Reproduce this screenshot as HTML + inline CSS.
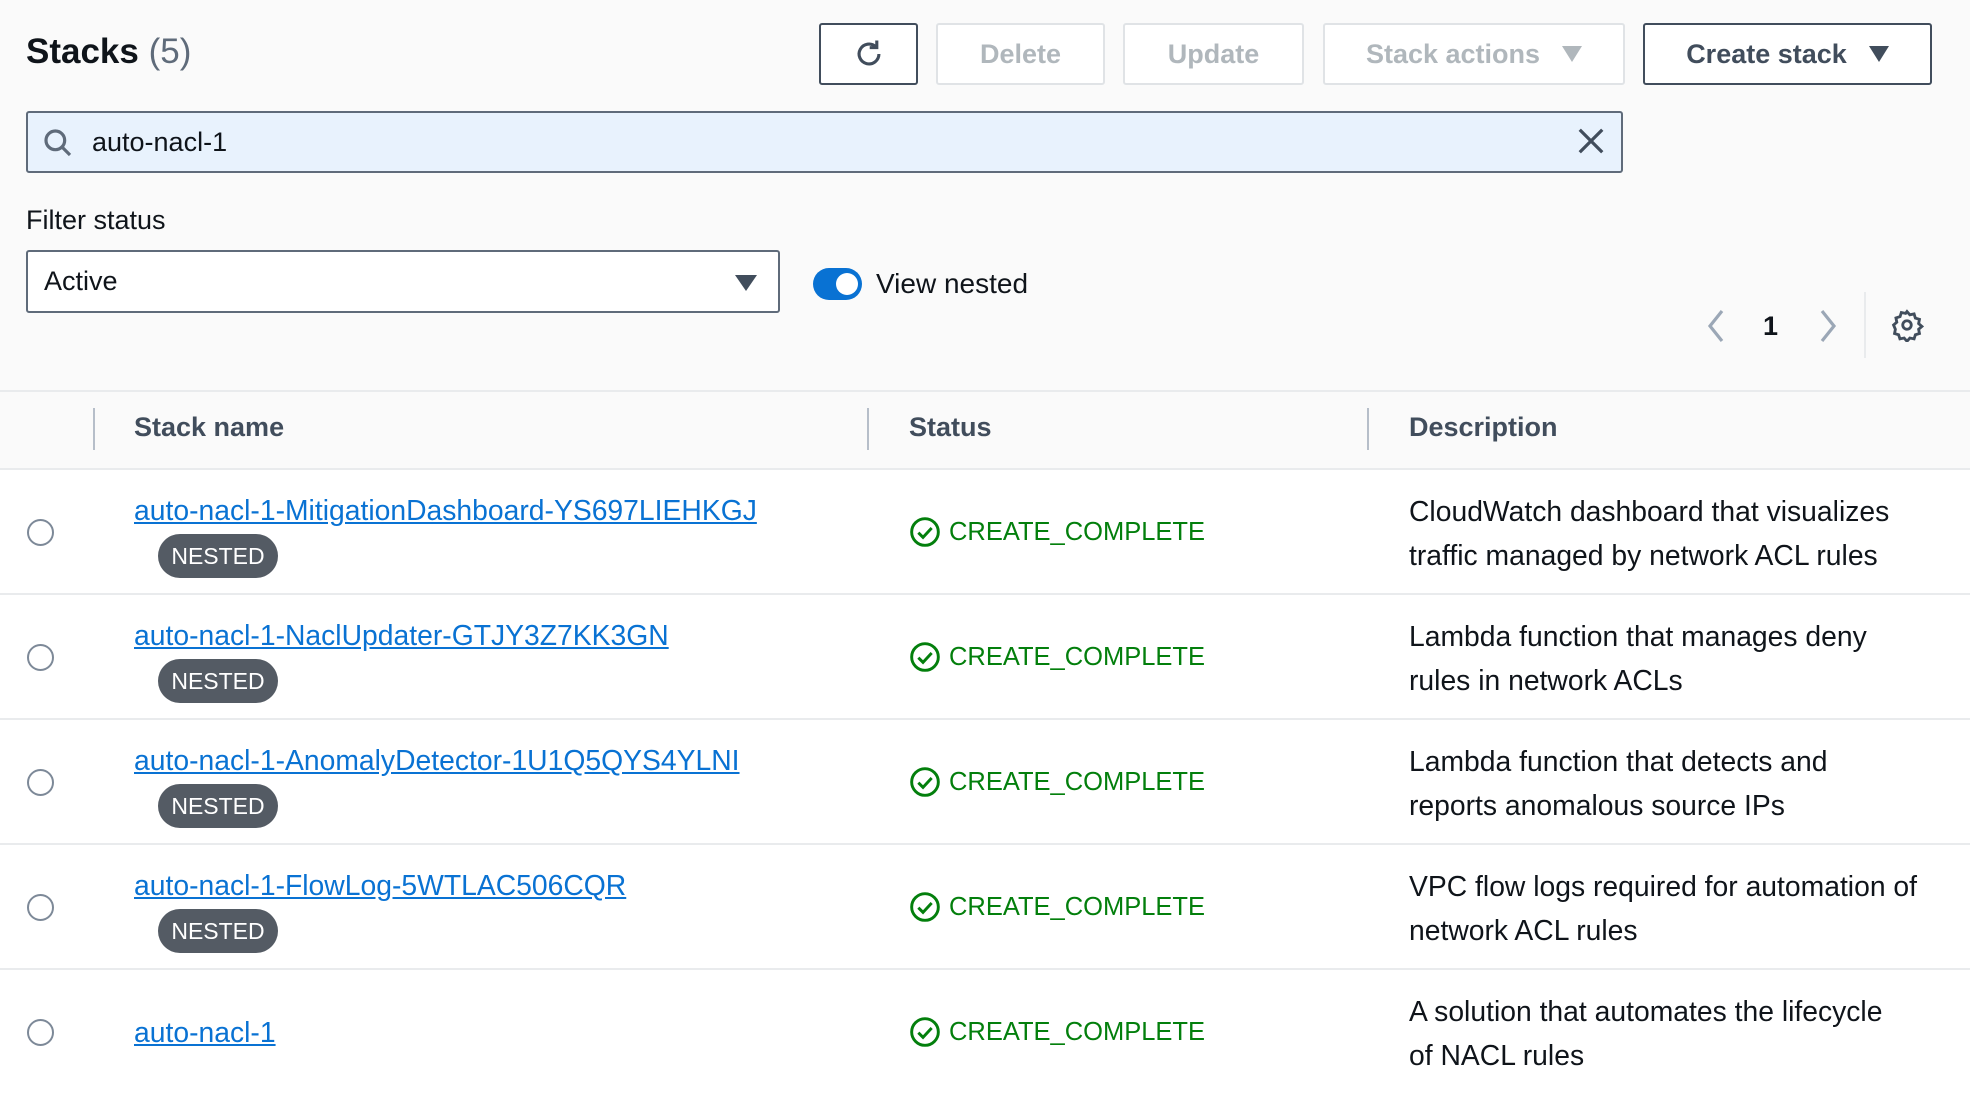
<!DOCTYPE html>
<html><head><meta charset="utf-8"><style>
*{margin:0;padding:0;box-sizing:border-box}
body{width:1970px;height:1090px;background:#fafafa;font-family:"Liberation Sans",sans-serif;color:#0f141a;position:relative;overflow:hidden}
.a{position:absolute;white-space:nowrap}
.btn{position:absolute;top:23px;height:62px;border:2px solid #e0e3e6;border-radius:3px;background:#fff;color:#b0b7bc;font-weight:bold;font-size:27px;display:flex;align-items:center;justify-content:center}
.btn.on{border-color:#414d5c;color:#414d5c}
.tri{display:inline-block;width:0;height:0;border-left:10px solid transparent;border-right:10px solid transparent;border-top:16px solid currentColor;margin-left:22px}
.row{position:absolute;left:0;width:1970px;height:125px;background:#fff;border-bottom:2px solid #e9ebed}
.radio{position:absolute;left:27px;width:27px;height:27px;border:2px solid #7d8998;border-radius:50%}
.link{position:absolute;left:134px;color:#0972d3;text-decoration:underline;font-size:28.3px}
.badge{position:absolute;left:158px;width:120px;height:44px;border-radius:22px;background:#545b64;color:#fff;font-size:23px;display:flex;align-items:center;justify-content:center}
.st{position:absolute;left:909px;color:#037f0c;font-size:25.5px;display:flex;align-items:center}
.st svg{margin-right:8px}
.desc{position:absolute;left:1409px;font-size:28.3px;line-height:44px}
.th{position:absolute;top:412px;font-weight:bold;font-size:27px;color:#414d5c}
.vd{position:absolute;top:408px;width:2px;height:42px;background:#b6bec9}
</style></head><body>
<div class="a" style="left:26px;top:32px;font-size:35px;font-weight:bold">Stacks <span style="color:#5f6b7a;font-weight:normal">(5)</span></div>
<div class="btn on" style="left:819px;width:99px"><svg width="34" height="34" viewBox="0 0 24 24" fill="none" stroke="#414d5c" stroke-width="2.2"><path d="M19 12a7 7 0 1 1-2.2-5.1"/><path d="M17.5 2.5v5h-5"/></svg></div>
<div class="btn" style="left:936px;width:169px">Delete</div>
<div class="btn" style="left:1123px;width:181px">Update</div>
<div class="btn" style="left:1323px;width:302px">Stack actions<span class="tri"></span></div>
<div class="btn on" style="left:1643px;width:289px">Create stack<span class="tri"></span></div>
<div class="a" style="left:26px;top:111px;width:1597px;height:62px;background:#e8f2fd;border:2px solid #5f6b7a;border-radius:3px"></div>
<svg class="a" style="left:42px;top:127px" width="32" height="32" viewBox="0 0 24 24" fill="none" stroke="#5f6b7a" stroke-width="2.4"><circle cx="10" cy="10" r="7"/><path d="M15 15l6 6"/></svg>
<div class="a" style="left:92px;top:127px;font-size:27px">auto-nacl-1</div>
<svg class="a" style="left:1576px;top:126px" width="30" height="30" viewBox="0 0 24 24" stroke="#414d5c" stroke-width="2.6"><path d="M3 3l18 18M21 3L3 21"/></svg>
<div class="a" style="left:26px;top:205px;font-size:27px">Filter status</div>
<div class="a" style="left:26px;top:250px;width:754px;height:63px;background:#fff;border:2px solid #5f6b7a;border-radius:3px"></div>
<div class="a" style="left:44px;top:266px;font-size:27px">Active</div>
<div class="a" style="left:735px;top:275px;width:0;height:0;border-left:11px solid transparent;border-right:11px solid transparent;border-top:16px solid #414d5c"></div>
<div class="a" style="left:813px;top:268px;width:49px;height:32px;border-radius:16px;background:#0972d3"></div>
<div class="a" style="left:836px;top:273px;width:22px;height:22px;border-radius:50%;background:#fff"></div>
<div class="a" style="left:876px;top:268px;font-size:28px">View nested</div>
<svg class="a" style="left:1704px;top:309px" width="24" height="34" viewBox="0 0 12 17" fill="none" stroke="#9ba7b6" stroke-width="1.6"><path d="M9 1L3 8.5 9 16"/></svg>
<div class="a" style="left:1763px;top:311px;font-size:27px;font-weight:bold">1</div>
<svg class="a" style="left:1816px;top:309px" width="24" height="34" viewBox="0 0 12 17" fill="none" stroke="#9ba7b6" stroke-width="1.6"><path d="M3 1l6 7.5L3 16"/></svg>
<div class="a" style="left:1864px;top:292px;width:2px;height:66px;background:#e9ebed"></div>
<svg class="a" style="left:1890px;top:308px" width="34" height="34" viewBox="0 0 24 24" fill="none" stroke="#414d5c" stroke-width="2"><circle cx="12" cy="12" r="3"/><path d="M12 2.5l2 2.3 3-.6.9 2.9 2.9.9-.6 3 2.3 2-2.3 2 .6 3-2.9.9-.9 2.9-3-.6-2 2.3-2-2.3-3 .6-.9-2.9-2.9-.9.6-3L2.5 12l2.3-2-.6-3 2.9-.9.9-2.9 3 .6z"/></svg>
<div class="a" style="left:0;top:390px;width:1970px;height:2px;background:#e9ebed"></div>
<div class="vd" style="left:93px"></div><div class="vd" style="left:867px"></div><div class="vd" style="left:1367px"></div>
<div class="th" style="left:134px">Stack name</div>
<div class="th" style="left:909px">Status</div>
<div class="th" style="left:1409px">Description</div>
<div class="a" style="left:0;top:468px;width:1970px;height:2px;background:#e9ebed"></div>

<div class="row" style="top:470px">
<div class="radio" style="top:49px"></div>
<div class="link" style="top:24px">auto-nacl-1-MitigationDashboard-YS697LIEHKGJ</div>
<div class="badge" style="top:64px">NESTED</div>
<div class="st" style="top:46px"><svg width="32" height="32" viewBox="0 0 24 24" fill="none" stroke="#037f0c" stroke-width="2.2"><circle cx="12" cy="12" r="10"/><path d="M7 12.5l3.5 3.5L17 9"/></svg>CREATE_COMPLETE</div>
<div class="desc" style="top:19px">CloudWatch dashboard that visualizes<br>traffic managed by network ACL rules</div>
</div>
<div class="row" style="top:595px">
<div class="radio" style="top:49px"></div>
<div class="link" style="top:24px">auto-nacl-1-NaclUpdater-GTJY3Z7KK3GN</div>
<div class="badge" style="top:64px">NESTED</div>
<div class="st" style="top:46px"><svg width="32" height="32" viewBox="0 0 24 24" fill="none" stroke="#037f0c" stroke-width="2.2"><circle cx="12" cy="12" r="10"/><path d="M7 12.5l3.5 3.5L17 9"/></svg>CREATE_COMPLETE</div>
<div class="desc" style="top:19px">Lambda function that manages deny<br>rules in network ACLs</div>
</div>
<div class="row" style="top:720px">
<div class="radio" style="top:49px"></div>
<div class="link" style="top:24px">auto-nacl-1-AnomalyDetector-1U1Q5QYS4YLNI</div>
<div class="badge" style="top:64px">NESTED</div>
<div class="st" style="top:46px"><svg width="32" height="32" viewBox="0 0 24 24" fill="none" stroke="#037f0c" stroke-width="2.2"><circle cx="12" cy="12" r="10"/><path d="M7 12.5l3.5 3.5L17 9"/></svg>CREATE_COMPLETE</div>
<div class="desc" style="top:19px">Lambda function that detects and<br>reports anomalous source IPs</div>
</div>
<div class="row" style="top:845px">
<div class="radio" style="top:49px"></div>
<div class="link" style="top:24px">auto-nacl-1-FlowLog-5WTLAC506CQR</div>
<div class="badge" style="top:64px">NESTED</div>
<div class="st" style="top:46px"><svg width="32" height="32" viewBox="0 0 24 24" fill="none" stroke="#037f0c" stroke-width="2.2"><circle cx="12" cy="12" r="10"/><path d="M7 12.5l3.5 3.5L17 9"/></svg>CREATE_COMPLETE</div>
<div class="desc" style="top:19px">VPC flow logs required for automation of<br>network ACL rules</div>
</div>
<div class="row" style="top:970px;height:130px;border:none">
<div class="radio" style="top:49px"></div>
<div class="link" style="top:46px">auto-nacl-1</div>
<div class="st" style="top:46px"><svg width="32" height="32" viewBox="0 0 24 24" fill="none" stroke="#037f0c" stroke-width="2.2"><circle cx="12" cy="12" r="10"/><path d="M7 12.5l3.5 3.5L17 9"/></svg>CREATE_COMPLETE</div>
<div class="desc" style="top:19px">A solution that automates the lifecycle<br>of NACL rules</div>
</div>
</body></html>
